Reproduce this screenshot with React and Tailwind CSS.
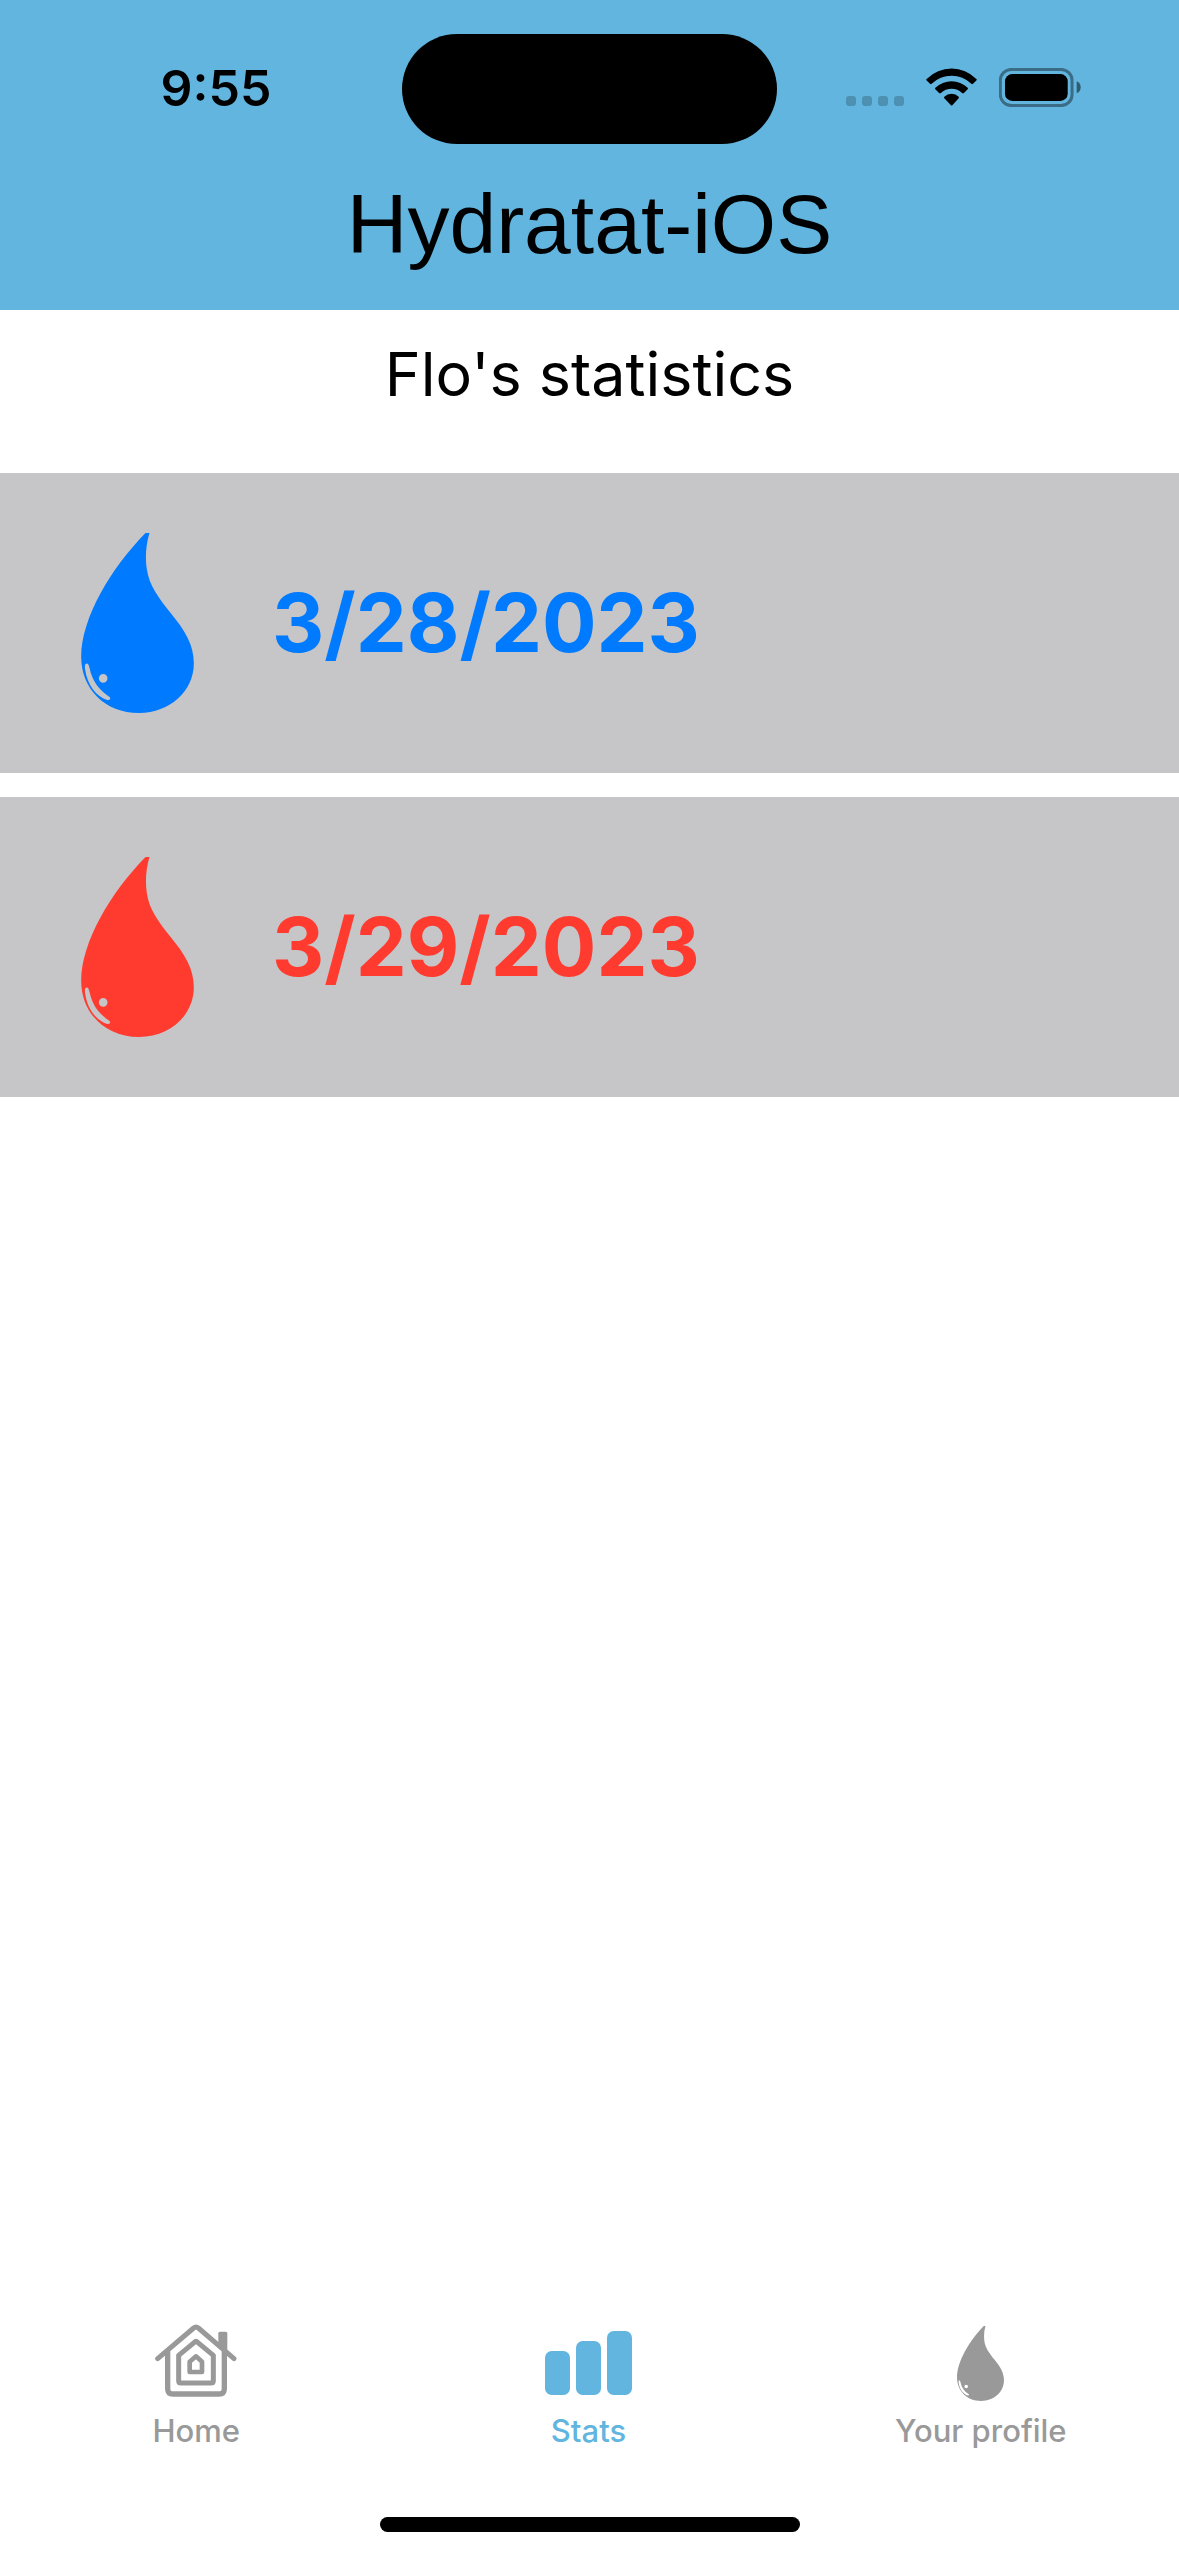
function DropIcon({ className }) {
  return (
    <svg viewBox="126 99 338 540" className={className} fill="currentColor" fillRule="evenodd" aria-hidden="true">
      <path d="M331 99C320 135 318 172 323 208C330 256 357 292 395 340C438 392 464 436 464 490C464 574 392 639 300 639C196 639 126 565 126 470C126 355 215 205 319 99ZM141 491C136 492 137 500 138 509C144 552 170 589 204 600C213 601 216 594 210 590C180 570 160 545 151 504C149 494 146 490 141 491ZM192 522A13 13 0 1 0 192 548A13 13 0 1 0 192 522Z" />
    </svg>
  );
}

function HomeIcon() {
  return (
    <svg viewBox="74 70 246 237" className="h-[79px] w-[82px]" fill="none" stroke="currentColor" strokeLinejoin="round" strokeLinecap="round" aria-hidden="true">
      <path d="M82 174L190 82Q197 76 204 82L311 174" strokeWidth="15" />
      <path d="M112 154V264Q112 280 128 280H266Q282 280 282 264V154" strokeWidth="16" />
      <path d="M264 128V98Q264 93 269 93H286Q291 93 291 98V150Z" fill="currentColor" stroke="none" />
      <path d="M145 164V240Q145 247 152 247H242Q249 247 249 240V164L202 125Q197 120 192 125Z" strokeWidth="15" />
      <path d="M178 183V214H215V183L197 167Z" strokeWidth="14" />
    </svg>
  );
}

function StatsIcon() {
  return (
    <svg viewBox="75 93 261 192" className="h-16 w-[87px]" fill="currentColor" aria-hidden="true">
      <rect x="75" y="153" width="75" height="132" rx="20" />
      <rect x="168" y="123" width="75" height="162" rx="20" />
      <rect x="261" y="93" width="75" height="192" rx="20" />
    </svg>
  );
}

function StatusIcons() {
  return (
    <div className="flex items-end justify-center pr-[30px] pb-[3px]">
      <svg viewBox="0 0 58 10" className="mb-px h-[10px] w-[58px]" fill="currentColor" fillOpacity="0.2" aria-hidden="true">
        <rect width="10" height="10" rx="3" />
        <rect x="16" width="10" height="10" rx="3" />
        <rect x="32" width="10" height="10" rx="3" />
        <rect x="48" width="10" height="10" rx="3" />
      </svg>
      <svg viewBox="438 146 153 113" className="mb-px ml-[22px] h-[38px] w-[51px]" fill="currentColor" aria-hidden="true">
        <path d="M439 179Q472 147 515 147Q557 147 590 179Q591 181 589 183L579 193Q577 195 574 193Q549 169 515 169Q480 169 455 193Q452 195 450 193L440 183Q438 181 439 179Z" />
        <path d="M466 205Q487 185 515 185Q542 185 563 205Q565 207 563 209L551 221Q549 222 547 221Q533 208 515 208Q496 208 482 221Q480 222 478 221L466 209Q464 207 466 205Z" />
        <path d="M493 232Q502 223 515 223Q527 223 536 232Q538 234 536 236L517 257Q515 259 513 257L493 236Q491 234 493 232Z" />
      </svg>
      <svg viewBox="657 144 247 117" className="ml-[22px] h-[39px] w-[82px]" aria-hidden="true">
        <rect x="661" y="148" width="216" height="109" rx="33" fill="none" stroke="black" strokeOpacity="0.4" strokeWidth="9" />
        <rect x="675" y="162" width="189" height="81" rx="22" />
        <path d="M891 184Q903 190 903 202Q903 215 891 220Z" fillOpacity="0.5" />
      </svg>
    </div>
  );
}

const days = [
  { date: "3/28/2023", color: "text-[#007aff]" },
  { date: "3/29/2023", color: "text-[#ff3b30]" },
];

const tabs = [
  { label: "Home", color: "text-[#999999]", icon: <HomeIcon /> },
  { label: "Stats", color: "text-[#61b5df]", icon: <StatsIcon />, active: true },
  { label: "Your profile", color: "text-[#999999]", icon: <DropIcon className="h-[75px] w-[47px]" /> },
];

export default function App() {
  return (
    <div className="flex min-h-screen flex-col bg-white font-['Inter',sans-serif] text-black">
      <header className="bg-[#61b5df] pt-[34px] pb-9">
        <div className="grid grid-cols-[1fr_375px_1fr] items-center">
          <time className="pb-[2px] pl-[30px] text-center text-[50px] leading-[60px] font-semibold">9:55</time>
          <div className="h-[110px] rounded-full bg-black" />
          <StatusIcons />
        </div>
        <h1 className="mt-[30px] text-center font-['Liberation_Sans',sans-serif] text-[84px] leading-[100px]">
          Hydratat-iOS
        </h1>
      </header>

      <main className="flex-1">
        <h2 className="pt-6 pb-[59px] text-center text-[61px] leading-[80px]">Flo's statistics</h2>
        <ul className="flex flex-col gap-6">
          {days.map((day) => (
            <li key={day.date} className="bg-[#c6c6c8]">
              <button type="button" className={`flex w-full items-center gap-[78px] py-[60px] pl-[81px] ${day.color}`}>
                <DropIcon className="h-[180px] w-[113px]" />
                <span className="text-[81px] leading-[96px] font-bold">{day.date}</span>
              </button>
            </li>
          ))}
        </ul>
      </main>

      <nav className="grid grid-cols-3 pr-[2px] pb-[66px]">
        {tabs.map((tab) => (
          <a
            key={tab.label}
            href="#"
            aria-current={tab.active ? "page" : undefined}
            className={`flex flex-col items-center gap-2 ${tab.color}`}
          >
            <span className="flex h-20 items-center">{tab.icon}</span>
            <span className="text-[31px] leading-[40px] font-medium">{tab.label}</span>
          </a>
        ))}
      </nav>
      <div className="mx-auto mb-6 h-[15px] w-[420px] rounded-full bg-black" />
    </div>
  );
}
